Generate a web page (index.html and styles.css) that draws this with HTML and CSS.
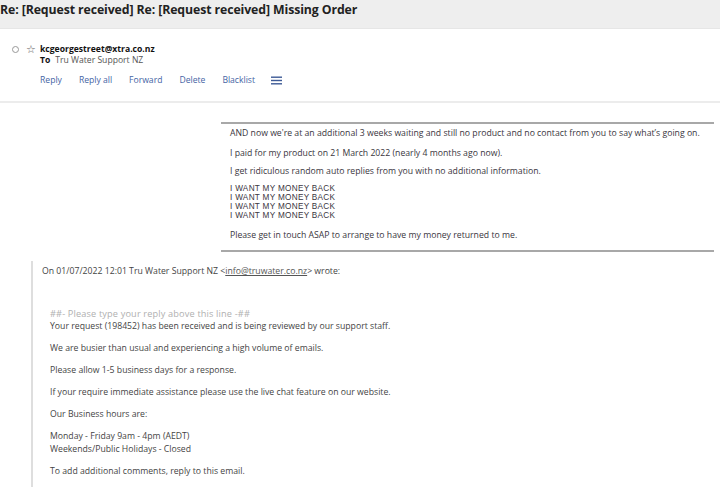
FILE: index.html
```html
<!DOCTYPE html>
<html>
<head>
<meta charset="utf-8">
<link rel="stylesheet" href="styles.css">
</head>
<body>
<div class="titlebar">Re: [Request received] Re: [Request received] Missing Order</div>
<div class="header">
  <div class="from-row">
    <span class="radio"></span>
    <span class="star">☆</span>
    <span class="sender">kcgeorgestreet@xtra.co.nz</span>
  </div>
  <div class="to-row"><span class="to-label">To</span><span class="to-name">Tru Water Support NZ</span></div>
  <div class="actions">
    <a class="act">Reply</a>
    <a class="act">Reply all</a>
    <a class="act">Forward</a>
    <a class="act">Delete</a>
    <a class="act">Blacklist</a>
    <span class="menu"><svg width="11" height="9" viewBox="0 0 11 9"><rect x="0" y="0.5" width="11" height="1.4" fill="#3d5a96"/><rect x="0" y="3.8" width="11" height="1.4" fill="#3d5a96"/><rect x="0" y="7.1" width="11" height="1.4" fill="#3d5a96"/></svg></span>
  </div>
</div>
<div class="divider"></div>
<div class="message">
  <div class="block1">
    <p class="p1">AND now we're at an additional 3 weeks waiting and still no product and no contact from you to say what’s going on.</p>
    <p class="p2">I paid for my product on 21 March 2022 (nearly 4 months ago now).</p>
    <p class="p3">I get ridiculous random auto replies from you with no additional information.</p>
    <p class="tight">I WANT MY MONEY BACK<br>I WANT MY MONEY BACK<br>I WANT MY MONEY BACK<br>I WANT MY MONEY BACK</p>
    <p class="last">Please get in touch ASAP to arrange to have my money returned to me.</p>
  </div>
  <div class="quote">
    <p class="wrote">On 01/07/2022 12:01 Tru Water Support NZ &lt;<a class="mail">info@truwater.co.nz</a>&gt; wrote:</p>
    <div class="inner">
      <p class="hint">##- Please type your reply above this line -##</p>
      <p>Your request (198452) has been received and is being reviewed by our support staff.</p>
      <p>We are busier than usual and experiencing a high volume of emails.</p>
      <p>Please allow 1-5 business days for a response.</p>
      <p>If your require immediate assistance please use the live chat feature on our website.</p>
      <p>Our Business hours are:</p>
      <p>Monday - Friday 9am - 4pm (AEDT)<br>Weekends/Public Holidays - Closed</p>
      <p>To add additional comments, reply to this email.</p>
    </div>
  </div>
</div>
</body>
</html>
```

FILE: styles.css
```css
html, body {
  margin: 0;
  padding: 0;
  background: #fff;
}
body {
  font-family: "Open Sans", "Noto Sans", sans-serif;
  color: #333;
  width: 720px;
  height: 487px;
  overflow: hidden;
}
.titlebar {
  height: 29px;
  background: #eeeeee;
  border-bottom: 1px solid #e6e6e6;
  box-sizing: border-box;
  font-weight: 700;
  font-size: 12.3px;
  line-height: 20px;
  color: #222;
  letter-spacing: -0.1px;
}
.header {
  padding: 14px 0 0 12px;
  height: 58px;
}
.from-row {
  display: flex;
  align-items: center;
  height: 12px;
}
.radio {
  width: 5px;
  height: 5px;
  border: 1px solid #999;
  border-radius: 50%;
}
.star {
  font-size: 11px;
  color: #666;
  margin-left: 7px;
  width: 14px;
  line-height: 12px;
}
.sender {
  font-weight: 700;
  font-size: 8.6px;
  color: #111;
}
.to-row {
  margin-left: 28px;
  font-size: 8.6px;
  line-height: 11px;
}
.to-label {
  font-weight: 700;
  color: #111;
}
.to-name {
  color: #555;
  margin-left: 5px;
}
.actions {
  margin: 8px 0 0 28px;
  display: flex;
  align-items: center;
  gap: 17px;
  font-size: 8.6px;
  line-height: 12px;
}
.act {
  color: #4464a4;
}
.menu {
  display: flex;
  margin-left: -1px;
}
.divider {
  height: 2px;
  background: #ececec;
}
.message {
  padding-top: 19px;
  font-size: 8.7px;
}
.block1 {
  margin-left: 221px;
  width: 493px;
  border-top: 2px solid #a8a8a8;
  border-bottom: 2px solid #a8a8a8;
  padding: 3.5px 0 0 9px;
  box-sizing: border-box;
  color: #3a3640;
}
.block1 p {
  margin: 0;
  line-height: 11px;
}
.block1 p.p1 {
  margin-bottom: 9px;
}
.block1 p.p2 {
  margin-bottom: 7px;
}
.block1 p.p3 {
  margin-bottom: 7px;
}
.block1 p.tight {
  font-family: "Liberation Sans", Arial, sans-serif;
  font-size: 8.2px;
  line-height: 9.2px;
  letter-spacing: 0.3px;
  margin-bottom: 9.3px;
}
.block1 p.last {
  margin-bottom: 9.5px;
}
.quote {
  margin: 9px 0 0 31px;
  border-left: 2px solid #dedede;
  padding-left: 9px;
  padding-top: 3.5px;
  height: 230px;
  color: #444;
}
.quote p {
  margin: 0 0 9px;
  line-height: 13px;
}
.quote p.wrote {
  margin: 0;
}
.mail {
  color: #555;
  text-decoration: underline;
}
.inner {
  margin-left: 8px;
  padding-top: 30.5px;
}
.inner p.hint {
  color: #b0b0b0;
  font-size: 9.2px;
  letter-spacing: 0.15px;
  line-height: 12px;
  margin: 0;
}
```
